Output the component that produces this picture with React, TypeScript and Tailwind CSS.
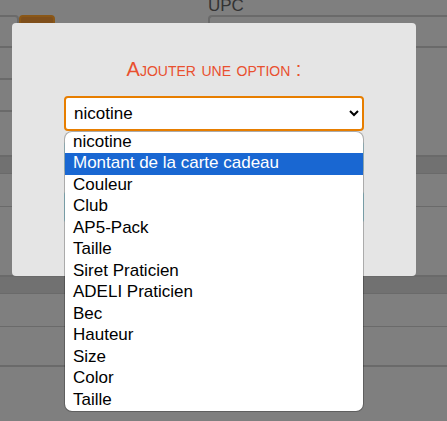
import React, { useState } from 'react';

const OPTIONS = [
  'nicotine',
  'Montant de la carte cadeau',
  'Couleur',
  'Club',
  'AP5-Pack',
  'Taille',
  'Siret Praticien',
  'ADELI Praticien',
  'Bec',
  'Hauteur',
  'Size',
  'Color',
  'Taille',
];

const ProductForm: React.FC = () => (
  <div className="min-h-screen bg-[#717171] text-[#333333]">
    <section className="grid grid-cols-[208px_1fr] h-[157px] bg-[#7f7f7f] border-b-2 border-[#6a6a6a]">
      <div className="pt-[15px]">
        <div className="flex h-[33px]">
          <div className="w-[19px] border-2 border-l-0 border-[#6a6a6a] rounded-r" />
          <button type="button" aria-label="Ajouter" className="w-9 bg-[#7f4f1b] border-2 border-[#8a5717] rounded" />
        </div>
        <div className="h-8 border-b-2 border-[#6a6a6a]" />
        <div className="h-8 border-b-2 border-[#6a6a6a]" />
      </div>
      <div className="flex flex-col">
        <label htmlFor="upc" className="h-[15px] leading-3">UPC</label>
        <input id="upc" className="w-full h-[33px] border-2 border-r-0 border-[#6a6a6a] rounded-l" />
      </div>
    </section>

    <section className="mt-4 h-[104px] bg-[#7f7f7f] border-t border-b-2 border-[#6a6a6a]">
      <div className="h-[33px] border-b border-[#6a6a6a]" />
    </section>

    <section className="mt-4 h-32 bg-[#7f7f7f] border-t border-[#6a6a6a]">
      <div className="h-[33px] border-b border-[#6a6a6a]" />
      <div className="h-10 border-b-2 border-[#6a6a6a]" />
    </section>
  </div>
);

const OptionPicker: React.FC = () => {
  const [selected, setSelected] = useState(0);
  const [active, setActive] = useState(1);

  return (
    <div className="relative">
      <select
        aria-labelledby="modal-title"
        value={selected}
        onChange={(e) => setSelected(Number(e.target.value))}
        className="block w-full h-[35px] px-1 bg-white border-2 border-[#e77e00] rounded text-black outline-none"
      >
        {OPTIONS.map((name, i) => (
          <option key={i} value={i}>{name}</option>
        ))}
      </select>

      <ul
        role="listbox"
        className="absolute top-full inset-x-0 z-10 h-[281px] flex flex-col bg-white bg-clip-padding border border-black/25 rounded-lg overflow-hidden text-black"
      >
        {OPTIONS.map((name, i) => (
          <li
            key={i}
            role="option"
            aria-selected={i === selected}
            onMouseEnter={() => setActive(i)}
            onClick={() => setSelected(i)}
            className={`flex-1 px-2 leading-5 ${i === active ? 'bg-[#1967d2] text-white' : ''}`}
          >
            {name}
          </li>
        ))}
      </ul>
    </div>
  );
};

export default function App() {
  return (
    <div className="relative h-screen overflow-hidden font-['Liberation_Sans',Arial,sans-serif] text-[17px]">
      <ProductForm />

      <div className="absolute inset-x-0 top-0 pt-[23px] pl-3 pr-[31px]">
        <div role="dialog" aria-labelledby="modal-title" className="h-[253px] px-[52px] pt-8 bg-[#e5e5e5] rounded">
          <h2 id="modal-title" className="h-[41px] text-center text-xl leading-7 text-[#e9502f] [font-variant:small-caps]">
            Ajouter une option :
          </h2>
          <OptionPicker />
          {/* Footer buttons, covered by the open list */}
          <div className="mt-[10px] h-8 bg-[#b9dde6] rounded" />
          <div className="mt-[18px] h-8 bg-[#9fd0dc] rounded" />
        </div>
      </div>
    </div>
  );
}
